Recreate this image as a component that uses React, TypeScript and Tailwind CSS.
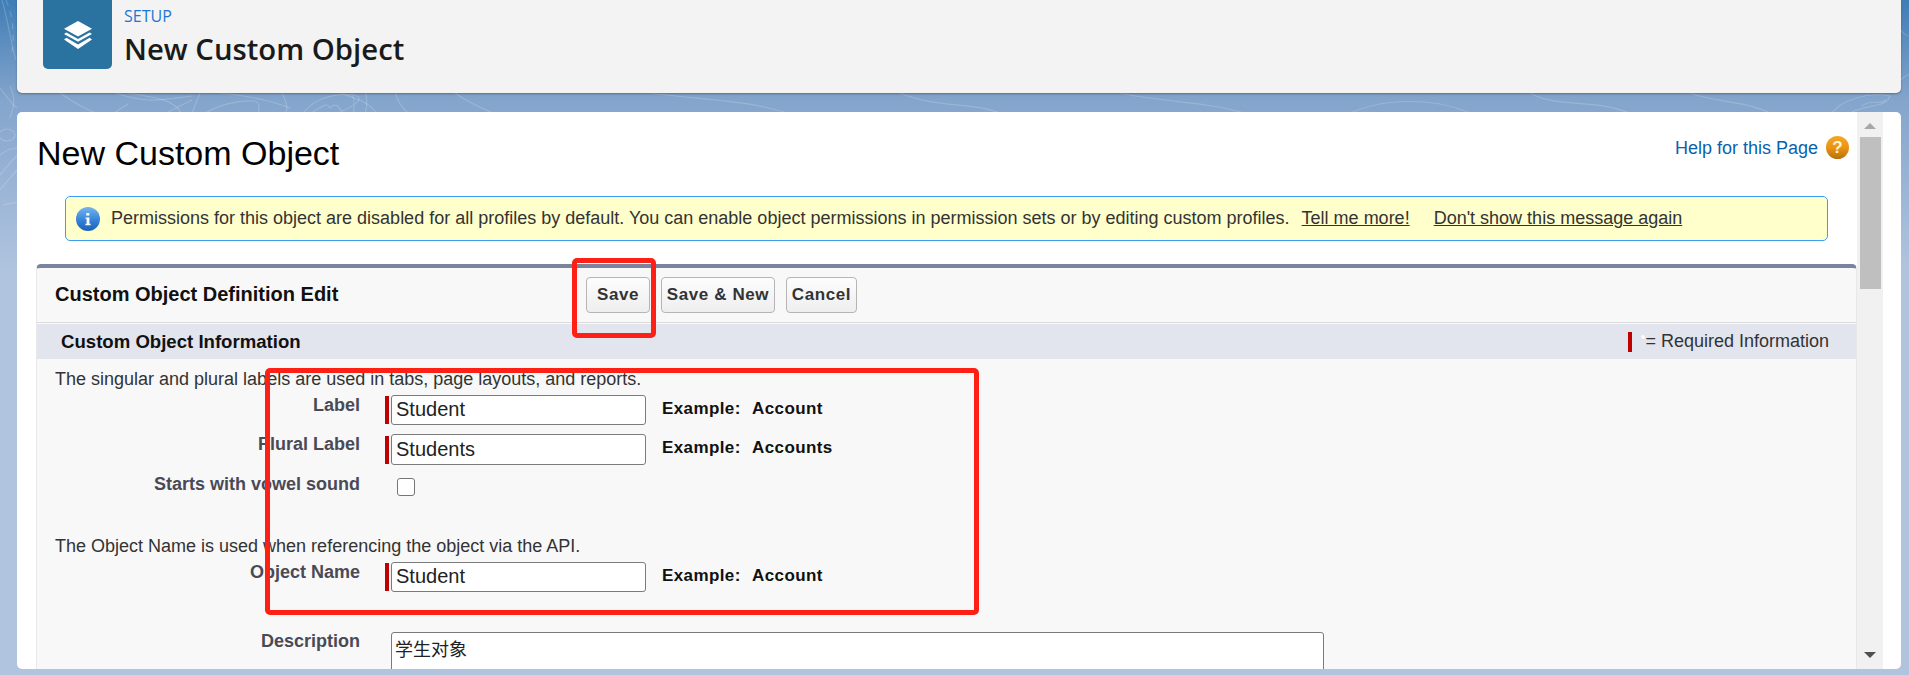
import React from "react";

const sans = "font-['Liberation_Sans',Arial,sans-serif]";

function Backdrop() {
  return (
    <svg className="absolute inset-0" width="1909" height="300" viewBox="0 0 1909 300" fill="none" stroke="#ffffff" strokeOpacity="0.18" strokeWidth="1.2">
      <path d="M2 0C8 20 10 40 16 60" />
      <path d="M6 0C14 18 14 36 12 52" strokeDasharray="6 6" />
      <path d="M0 88C6 96 12 104 17 108" />
      <path d="M10 86C14 96 16 100 10 118" />
      <ellipse cx="7" cy="135" rx="8" ry="6" />
      <path d="M0 155C6 150 12 148 17 148M0 175C6 168 12 160 17 156M0 190C6 182 12 176 17 170M3 205C8 204 14 202 17 203" />
      <path d="M60 93C74 103 90 112 108 118M115 93C150 104 160 100 192 96M192 100L168 112M128 104L106 118M200 93L190 118" />
      <path d="M220 93C250 96 270 100 290 108M340 93C352 98 370 100 380 118M128 93C168 99 178 103 184 118M198 118C216 104 240 100 254 101C262 102 258 112 258 118" />
      <path d="M282 93C286 102 290 108 283 118M300 118C310 100 330 93 354 95C368 98 350 108 340 112M306 115C320 110 326 100 330 108C336 100 342 110 344 118M352 93C356 104 354 110 352 118M366 93C368 104 366 110 364 118M395 93L400 104L412 118" />
      <path d="M455 93C470 104 490 112 505 118" />
      <path d="M650 93C700 100 760 100 800 118M900 93C940 110 980 100 1010 118M1120 93C1170 104 1210 100 1260 118M1340 118C1380 96 1440 96 1480 118M1530 93C1560 110 1600 96 1640 118" />
      <path d="M1690 93C1720 104 1750 100 1780 118M1828 118C1840 98 1870 92 1890 96C1886 108 1868 104 1852 112M1862 106C1872 98 1878 106 1886 100" />
      <path d="M1901 30C1905 36 1908 36 1909 36M1901 80C1904 76 1906 76 1909 74" />
    </svg>
  );
}

function StackIcon() {
  return (
    <svg width="30" height="30" viewBox="0 0 30 30" fill="#fff">
      <path d="M15 1L29 8.8 15 16.5 1 8.8Z" />
      <path d="M3.4 12.4L15 19l11.6-6.6L29 14 15 21.8 1 14Z" />
      <path d="M3.4 17.8L15 24.4l11.6-6.6L29 19.4 15 29 1 19.4Z" />
    </svg>
  );
}

function InfoIcon() {
  return (
    <svg width="24" height="24" viewBox="0 0 24 24" className="shrink-0">
      <defs>
        <linearGradient id="ig" x1="0" y1="0" x2="0" y2="1">
          <stop offset="0" stopColor="#78b4ec" />
          <stop offset="0.6" stopColor="#2f7fd6" />
          <stop offset="1" stopColor="#1c62b8" />
        </linearGradient>
      </defs>
      <circle cx="12" cy="12" r="12" fill="url(#ig)" />
      <rect x="10.3" y="6" width="3" height="2.6" fill="#fff" />
      <path d="M9.5 10.4h3.9v6.4h1.2v1.4H9.4v-1.4h1.2v-5H9.5Z" fill="#fff" />
    </svg>
  );
}

function HelpIcon() {
  return (
    <span className="relative flex h-[23px] w-[23px] -translate-y-[1px] items-center justify-center rounded-full bg-linear-to-b from-[#f5a623] via-[#ee9412] to-[#b5700f] text-[17px] leading-none font-bold text-[#fff4d8]">
      ?
    </span>
  );
}

function ReqBar() {
  return <span className="h-[28px] w-[4px] shrink-0 bg-[#c00000]" />;
}

function Btn({ children, className }: { children: React.ReactNode; className: string }) {
  return (
    <button className={`h-[36px] rounded-[4px] border border-[#b5b5b5] bg-linear-to-b from-[#fdfdfd] to-[#eeeeee] text-center text-[17px] font-bold tracking-[0.6px] text-[#333] ${className}`}>
      {children}
    </button>
  );
}

function Example({ value }: { value: string }) {
  return (
    <div className="ml-[16px] flex h-full text-[17px] font-bold tracking-[0.4px] text-[#111]">
      <span className="w-[90px]">Example:</span>
      <span>{value}</span>
    </div>
  );
}

function Label({ children, className = "" }: { children: React.ReactNode; className?: string }) {
  return <div className={`w-[342px] shrink-0 text-right text-[18px] leading-[18px] font-bold text-[#4a4a56] ${className}`}>{children}</div>;
}

function InputRow({ label, value, example, className, h = "h-[30px]" }: { label: string; value: string; example: string; className: string; h?: string }) {
  return (
    <div className={`flex ${className}`}>
      <Label className="-ml-[37px] pt-[1px]">{label}</Label>
      <div className="ml-[25px] flex items-center gap-[2px]">
        <ReqBar />
        <div className={`flex w-[255px] items-center rounded-[3px] border border-[#7b7b7b] bg-white pb-[2px] pl-[4px] text-[20px] text-[#222] ${h}`}>{value}</div>
      </div>
      <div className="pt-[5px] leading-[18px]">
        <Example value={example} />
      </div>
    </div>
  );
}

export default function App() {
  return (
    <div className={`${sans} relative h-[675px] w-[1909px] overflow-hidden bg-linear-to-b from-[#3f7db6] via-[#84a5cc] via-15% to-[#b0c4df] to-40%`}>
      <Backdrop />
      <div className="relative flex h-full flex-col pr-[8px] pb-[6px] pl-[17px]">
        {/* page header */}
        <header className="flex h-[93px] shrink-0 rounded-b-[5px] bg-[#f3f3f3] pl-[26px] shadow-[0_1px_2px_rgba(60,60,60,0.5)]">
          <div className="flex h-[69px] w-[69px] items-center justify-center rounded-b-[5px] bg-[#2a73a0]">
            <StackIcon />
          </div>
          <div className="ml-[12px] flex flex-col font-['Open_Sans',sans-serif]">
            <div className="mt-[4px] text-[16px] leading-[24px] text-[#1d76d2]">SETUP</div>
            <div className="mt-[1px] text-[29.3px] leading-[40px] font-semibold text-[#1a1a1a]">New Custom Object</div>
          </div>
        </header>

        {/* main card */}
        <main className="mt-[19px] flex min-h-0 flex-1 overflow-hidden rounded-[5px] bg-white">
          <div className="flex w-[1840px] shrink-0 flex-col">
            <div className="flex h-[61px] items-start justify-between pr-[8px] pl-[20px]">
              <h1 className="mt-[21px] text-[34px] leading-[40px] text-black">New Custom Object</h1>
              <div className="mt-[24px] flex items-center gap-[8px] text-[18px] leading-[24px] text-[#0a62ae]">
                <span>Help for this Page</span>
                <HelpIcon />
              </div>
            </div>

            <div className="mt-[23px] mr-[29px] ml-[48px] flex h-[45px] items-center rounded-[5px] border border-[#3d9cf3] bg-[#ffffcc] pl-[10px] text-[18px] text-[#333]">
              <InfoIcon />
              <span className="ml-[11px]">Permissions for this object are disabled for all profiles by default. You can enable object permissions in permission sets or by editing custom profiles.</span>
              <a className="ml-[12px] underline">Tell me more!</a>
              <a className="ml-[24px] underline">Don't show this message again</a>
            </div>

            <section className="mt-[23px] ml-[19px] min-h-0 flex-1 overflow-hidden rounded-t-[5px] border-x border-t-[4px] border-x-[#e8e8e8] border-t-[#7a849d] bg-[#f8f8f8]">
              <div className="flex h-[55px] items-center border-b border-[#dbdbdb] pl-[18px]">
                <h2 className="mb-[2px] w-[531px] text-[20px] font-bold text-[#111]">Custom Object Definition Edit</h2>
                <div className="flex gap-[11px]">
                  <Btn className="w-[64px]">Save</Btn>
                  <Btn className="w-[114px]">Save &amp; New</Btn>
                  <Btn className="w-[71px]">Cancel</Btn>
                </div>
              </div>
              <div className="mt-[1px] flex h-[35px] items-center justify-between bg-[#e2e5ee] pr-[27px] pl-[24px]">
                <h3 className="text-[18.6px] font-bold text-[#111]">Custom Object Information</h3>
                <div className="flex items-center text-[18px] text-[#333]">
                  <span className="h-[20px] w-[4px] bg-[#c00000]" />
                  <span className="ml-[9px] h-[4px] w-[4px] -translate-y-[5px] rounded-full bg-white/80" />
                  <span>= Required Information</span>
                </div>
              </div>

              <div className="pl-[18px]">
                <p className="mt-[10px] text-[18px] leading-[20px] text-[#333]">The singular and plural labels are used in tabs, page layouts, and reports.</p>
                <InputRow className="mt-[6px]" label="Label" value="Student" example="Account" />
                <InputRow className="mt-[9px]" label="Plural Label" value="Students" example="Accounts" h="h-[31px]" />
                <div className="mt-[10px] flex">
                  <Label className="-ml-[37px]">Starts with vowel sound</Label>
                  <span className="mt-[3px] ml-[37px] h-[18px] w-[18px] rounded-[3px] border border-[#767676] bg-white" />
                </div>
                <p className="mt-[40px] text-[18px] leading-[20px] text-[#333]">The Object Name is used when referencing the object via the API.</p>
                <InputRow className="mt-[6px]" label="Object Name" value="Student" example="Account" />
                <div className="mt-[40px] flex">
                  <Label className="-ml-[37px]">Description</Label>
                  <div className="ml-[31px] h-[120px] w-[933px] rounded-[3px] border border-[#7b7b7b] bg-white pt-[3px] pl-[3px] font-['Noto_Sans_CJK_SC',sans-serif] text-[18px] leading-[24px] text-[#222]">学生对象</div>
                </div>
              </div>
            </section>
          </div>

          {/* scrollbar */}
          <div className="flex w-[26px] shrink-0 flex-col items-center bg-[#f1f1f1]">
            <svg className="mt-[11px] mb-[8px]" width="12" height="6" viewBox="0 0 12 6">
              <path d="M6 0L12 6H0Z" fill="#a8a8a8" />
            </svg>
            <div className="h-[152px] w-[21px] bg-[#bfbfbf]" />
            <svg className="mt-auto mb-[11px]" width="12" height="6" viewBox="0 0 12 6">
              <path d="M0 0H12L6 6Z" fill="#505050" />
            </svg>
          </div>
        </main>
      </div>

      {/* red annotation boxes */}
      <div className="absolute top-[258px] left-[572px] h-[80px] w-[84px] rounded-[5px] border-[5px] border-[#ff2015]" />
      <div className="absolute top-[368px] left-[265px] h-[247px] w-[714px] rounded-[5px] border-[5px] border-[#ff2015]" />
    </div>
  );
}
